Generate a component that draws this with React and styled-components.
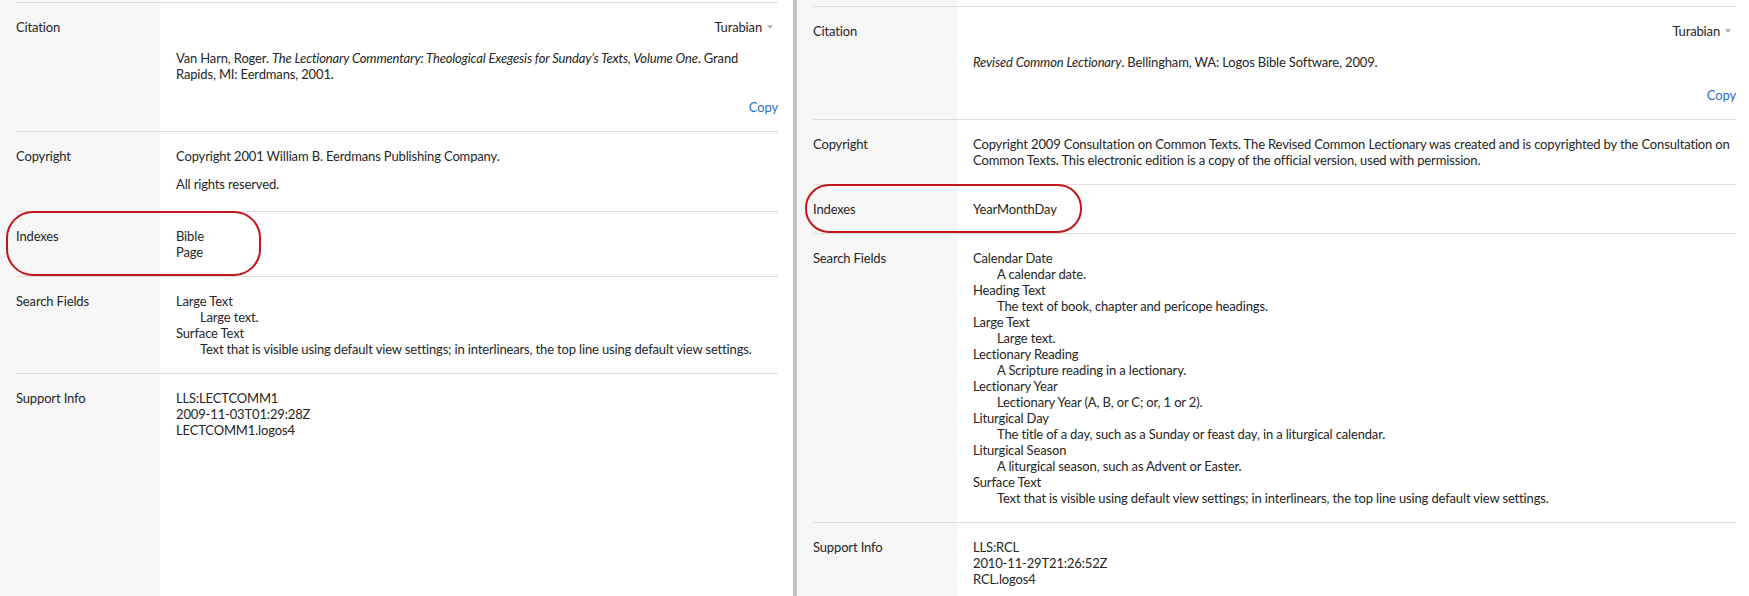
import React from 'react'
import styled, { createGlobalStyle } from 'styled-components'

const GlobalStyle = createGlobalStyle`
  html, body {
    margin: 0;
    padding: 0;
    background: #fff;
  }
  body {
    font-family: Lato, "Liberation Sans", sans-serif;
    font-size: 13px;
    line-height: 16px;
    letter-spacing: -0.15px;
    color: #262626;
  }
`

const Screen = styled.div`
  display: flex;
  height: 596px;
  overflow: hidden;
`

const Panel = styled.div`
  box-sizing: border-box;
  width: ${p => p.$width}px;
  flex: none;
  padding: ${p => p.$top}px ${p => p.$right}px 0 16px;
  background: linear-gradient(to right, #f7f7f7 160px, #fff 160px);
`

const Splitter = styled.div`
  flex: none;
  width: 4px;
  background: #c2c2c2;
`

const Row = styled.div`
  position: relative;
  display: grid;
  grid-template-columns: 160px 1fr;
  border-top: 1px solid #dedede;
  padding: 16px 0;
`

const Label = styled.div`
  color: #262626;
`

const Value = styled.div`
  min-width: 0;
  padding-bottom: ${p => p.$tail || 0}px;
`

const CiteHead = styled.div`
  display: flex;
  justify-content: flex-end;
  align-items: center;
  gap: 5px;
  padding-right: 5px;
`

const Caret = styled.span`
  width: 0;
  height: 0;
  border-left: 3px solid transparent;
  border-right: 3px solid transparent;
  border-top: 4px solid #b4b4b4;
`

const CiteText = styled.div`
  margin-top: 15px;
  padding-right: 20px;
`

const CopyLink = styled.a`
  display: block;
  margin-top: 17px;
  text-align: right;
  color: #2a6fc4;
  text-decoration: none;
  cursor: pointer;
`

const Para = styled.p`
  margin: 0;
  & + & {
    margin-top: 12px;
  }
`

const FieldName = styled.div``

const FieldDesc = styled.div`
  padding-left: 24px;
`

const Highlight = styled.div`
  position: absolute;
  top: -1px;
  bottom: 0;
  left: ${p => p.$left}px;
  width: ${p => p.$width}px;
  box-sizing: border-box;
  border: 2px solid #c4161c;
  border-radius: ${p => p.$radius}px;
  pointer-events: none;
`

const left = {
  top: 2,
  width: 793,
  right: 15,
  citation: (
    <>
      Van Harn, Roger. <i>The Lectionary Commentary: Theological Exegesis for Sunday’s Texts, Volume One</i>. Grand
      Rapids, MI: Eerdmans, 2001.
    </>
  ),
  copyright: [
    'Copyright 2001 William B. Eerdmans Publishing Company.',
    'All rights reserved.',
  ],
  copyTail: 3,
  indexes: ['Bible', 'Page'],
  highlight: { left: -10, width: 255, radius: 27 },
  fields: [
    ['Large Text', 'Large text.'],
    ['Surface Text', 'Text that is visible using default view settings; in interlinears, the top line using default view settings.'],
  ],
  support: ['LLS:LECTCOMM1', '2009-11-03T01:29:28Z', 'LECTCOMM1.logos4'],
}

const right = {
  top: 6,
  width: 952,
  right: 13,
  citation: (
    <>
      <i>Revised Common Lectionary</i>. Bellingham, WA: Logos Bible Software, 2009.
    </>
  ),
  copyright: [
    'Copyright 2009 Consultation on Common Texts. The Revised Common Lectionary was created and is copyrighted by the Consultation on Common Texts. This electronic edition is a copy of the official version, used with permission.',
  ],
  copyTail: 0,
  indexes: ['YearMonthDay'],
  highlight: { left: -8, width: 277, radius: 24 },
  fields: [
    ['Calendar Date', 'A calendar date.'],
    ['Heading Text', 'The text of book, chapter and pericope headings.'],
    ['Large Text', 'Large text.'],
    ['Lectionary Reading', 'A Scripture reading in a lectionary.'],
    ['Lectionary Year', 'Lectionary Year (A, B, or C; or, 1 or 2).'],
    ['Liturgical Day', 'The title of a day, such as a Sunday or feast day, in a liturgical calendar.'],
    ['Liturgical Season', 'A liturgical season, such as Advent or Easter.'],
    ['Surface Text', 'Text that is visible using default view settings; in interlinears, the top line using default view settings.'],
  ],
  support: ['LLS:RCL', '2010-11-29T21:26:52Z', 'RCL.logos4'],
}

const InfoPanel = ({ data }) => (
  <Panel $width={data.width} $top={data.top} $right={data.right}>
    <Row>
      <Label>Citation</Label>
      <Value>
        <CiteHead>
          Turabian <Caret />
        </CiteHead>
        <CiteText>{data.citation}</CiteText>
        <CopyLink>Copy</CopyLink>
      </Value>
    </Row>
    <Row>
      <Label>Copyright</Label>
      <Value $tail={data.copyTail}>
        {data.copyright.map(t => (
          <Para key={t}>{t}</Para>
        ))}
      </Value>
    </Row>
    <Row>
      <Highlight $left={data.highlight.left} $width={data.highlight.width} $radius={data.highlight.radius} />
      <Label>Indexes</Label>
      <Value>
        {data.indexes.map(t => (
          <div key={t}>{t}</div>
        ))}
      </Value>
    </Row>
    <Row>
      <Label>Search Fields</Label>
      <Value>
        {data.fields.map(([name, desc]) => (
          <React.Fragment key={name}>
            <FieldName>{name}</FieldName>
            <FieldDesc>{desc}</FieldDesc>
          </React.Fragment>
        ))}
      </Value>
    </Row>
    <Row>
      <Label>Support Info</Label>
      <Value>
        {data.support.map(t => (
          <div key={t}>{t}</div>
        ))}
      </Value>
    </Row>
  </Panel>
)

const App = () => (
  <>
    <GlobalStyle />
    <Screen>
      <InfoPanel data={left} />
      <Splitter />
      <InfoPanel data={right} />
    </Screen>
  </>
)

export default App
